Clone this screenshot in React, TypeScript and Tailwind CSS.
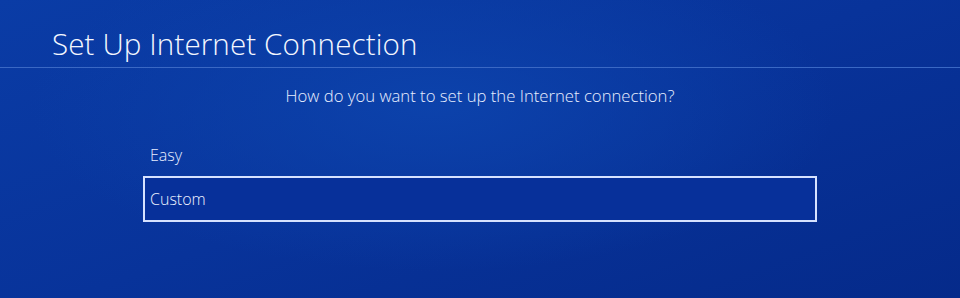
export default function App() {
  return (
    <div
      className="relative h-[298px] w-[960px] overflow-hidden text-white"
      style={{
        fontFamily: '"Open Sans", "Noto Sans", sans-serif',
        background:
          'radial-gradient(ellipse 60% 80% at 45% 35%, #0c42ab 0%, rgba(12,66,171,0) 70%), linear-gradient(160deg, #0a3ca6 0%, #08339a 50%, #052a8a 100%)',
      }}
    >
      <div className="flex h-[68px] items-end border-b border-[#3a68c4] pb-[2px] pl-[52px]">
        <h1 className="text-[29.6px] font-light leading-[42px] tracking-[0.1px] text-[#f4f7ff]">
          Set Up Internet Connection
        </h1>
      </div>
      <p className="mt-[17px] text-center text-[16.7px] font-light leading-[22px] text-[#e8eeff]">
        How do you want to set up the Internet connection?
      </p>
      <div className="ml-[143px] mt-[27px] flex w-[674px] flex-col">
        <div className="flex h-[42px] items-center px-[7px] text-[16px] font-light text-[#e8eeff]">
          Easy
        </div>
        <div className="flex h-[46px] items-center border-2 border-[#d6e2ff] bg-[#07309a] px-[5px] text-[16px] font-light text-[#eef3ff]">
          Custom
        </div>
      </div>
    </div>
  );
}
